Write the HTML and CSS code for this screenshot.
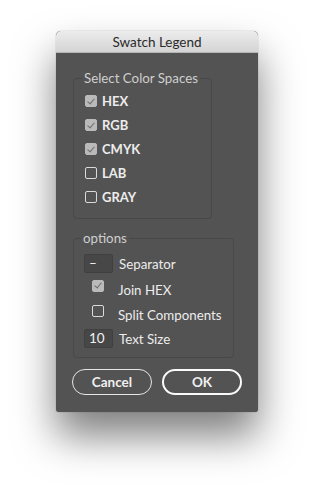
FILE: index.html
```html
<!DOCTYPE html>
<html>
<head>
    <title>Swatch Legend</title>
    <meta name="viewport" content="width=device-width, initial-scale=1.0">
    <link rel="stylesheet" href="styles.css">
</head>
<body>
    <div class="window">
        <div class="titlebar">Swatch Legend</div>
        <div class="content">
            <fieldset class="group spaces">
                <legend>Select Color Spaces</legend>
                <label class="row"><span class="box checked"></span><span>HEX</span></label>
                <label class="row"><span class="box checked"></span><span>RGB</span></label>
                <label class="row"><span class="box checked"></span><span>CMYK</span></label>
                <label class="row"><span class="box"></span><span>LAB</span></label>
                <label class="row"><span class="box"></span><span>GRAY</span></label>
            </fieldset>

            <fieldset class="group options">
                <legend>options</legend>
                <div class="opt"><span class="field">–</span><span>Separator</span></div>
                <label class="opt"><span class="box checked"></span><span>Join HEX</span></label>
                <label class="opt"><span class="box"></span><span>Split Components</span></label>
                <div class="opt"><span class="field">10</span><span>Text Size</span></div>
            </fieldset>

            <div class="buttons">
                <button class="btn">Cancel</button>
                <button class="btn default">OK</button>
            </div>
        </div>
    </div>
</body>
</html>
```

FILE: styles.css
```css
:root {
    --panel: #535353;
    --line: #484848;
    --text: #ececec;
    --muted: #cfcfcf;
}

* {
    box-sizing: border-box;
}

html, body {
    height: 100%;
}

body {
    margin: 0;
    padding: 31px 0 0 56px;
    background: #fff;
    font-family: Lato, "Open Sans", sans-serif;
}

.window {
    width: 202px;
    height: 381px;
    border-radius: 5px 5px 3px 3px;
    overflow: hidden;
    background: var(--panel);
    box-shadow: 0 24px 40px rgba(0,0,0,0.5), 0 0 1px rgba(0,0,0,0.5);
}

.titlebar {
    height: 22px;
    line-height: 22px;
    text-align: center;
    font-size: 13.5px;
    color: #2a2a2a;
    background: linear-gradient(#ececec, #d4d4d4);
    border-bottom: 1px solid #b5b5b5;
}

.content {
    padding: 18px 0 0 17px;
}

.group {
    margin: 0;
    border: 1px solid var(--line);
    border-radius: 4px;
    padding: 3px 0 9px 11px;
}

.group legend {
    padding: 0 2px;
    margin-left: -3px;
    font-size: 13.3px;
    line-height: 15px;
    color: var(--muted);
}

.spaces {
    width: 139px;
}

.options {
    width: 161px;
    margin-top: 12px;
    padding: 5px 0 6px 10px;
}

.row {
    display: flex;
    align-items: center;
    gap: 5px;
    height: 24px;
    font-size: 13px;
    font-weight: bold;
    color: var(--text);
}

.box {
    width: 12px;
    height: 12px;
    border: 1px solid #dadada;
    border-radius: 2px;
    flex-shrink: 0;
    display: flex;
    align-items: center;
    justify-content: center;
}

.box.checked {
    background: #bababa;
    border-color: #bababa;
}

.box.checked::after {
    content: "";
    width: 3px;
    height: 6px;
    margin-top: -2px;
    border: solid #6c6c6c;
    border-width: 0 1.5px 1.5px 0;
    transform: rotate(40deg);
}

.opt {
    display: flex;
    align-items: center;
    height: 25px;
    font-size: 13.3px;
    color: var(--text);
}

.opt > span:last-child {
    margin-left: 6px;
}

.opt .box {
    margin: 0 8px 6px 8px;
}

.opt .box + span {
    margin-left: 6px;
    padding-top: 2px;
}

.field {
    width: 29px;
    height: 19px;
    line-height: 17px;
    padding-left: 4px;
    background: #474747;
    border: 1px solid #404040;
    border-radius: 2px;
    font-size: 13.5px;
    color: #f2f2f2;
}

.buttons {
    display: flex;
    gap: 10px;
    margin: 11px 0 0 -1px;
}

.btn {
    width: 80px;
    height: 26px;
    border: 1.5px solid #e6e6e6;
    border-radius: 13px;
    background: transparent;
    color: #f0f0f0;
    font-family: Lato, "Open Sans", sans-serif;
    font-size: 13.5px;
    font-weight: bold;
}

.btn.default {
    border: 2px solid #fafafa;
}
```
